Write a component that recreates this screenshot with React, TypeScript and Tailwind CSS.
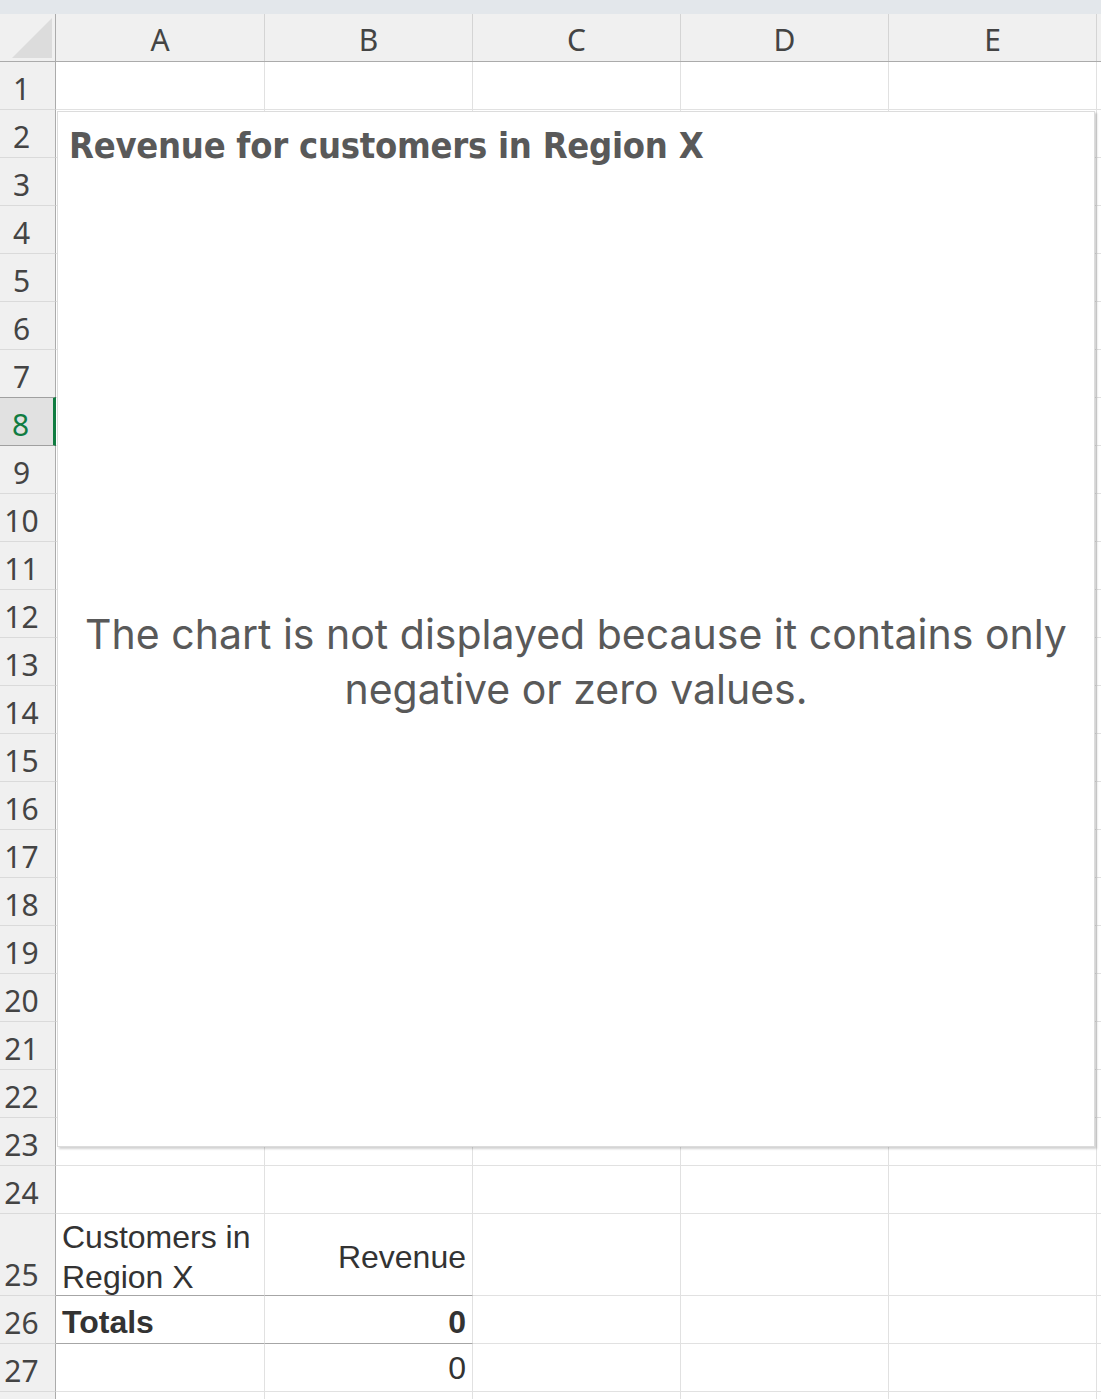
const COLS = ['A', 'B', 'C', 'D', 'E']
const ROWS = Array.from({ length: 28 }, (_, i) => i + 1)

const rowHeight = (n: number) => (n === 25 ? 'h-[82px]' : 'h-[48px]')

export default function App() {
  return (
    <div className="w-[1101px] h-[1399px] overflow-hidden bg-white relative" style={{ fontFamily: '"Noto Sans", sans-serif' }}>
      {/* top strip */}
      <div className="h-[14px] bg-[#e3e7eb]" />

      {/* column headers */}
      <div className="flex h-[48px] bg-[#f0f0f0] border-b border-[#ababab]">
        <div className="w-[56px] shrink-0 border-r border-[#ababab] flex items-end">
          <svg width="55" height="47" viewBox="0 0 55 47" className="block">
            <polygon points="12,44 52,4 52,44" fill="#dcdcdc" />
          </svg>
        </div>
        {COLS.map((c, i) => (
          <div
            key={c}
            className={`${i === 0 ? 'w-[209px]' : 'w-[208px]'} shrink-0 border-r border-[#d4d4d4] flex items-center justify-center text-[30px] text-[#444] leading-none pt-[4px]`}
          >
            {c}
          </div>
        ))}
        <div className="flex-1" />
      </div>

      {/* rows */}
      <div className="flex flex-col">
        {ROWS.map((n) => {
          const sel = n === 8
          return (
            <div key={n} className={`flex ${rowHeight(n)}`}>
              <div
                className={`w-[56px] shrink-0 flex items-end pb-[5px] pr-[12px] justify-center text-[30px] leading-none ${
                  sel
                    ? 'bg-[#e1e1e1] text-[#107c41] border-r-[3px] border-r-[#107c41] border-b border-b-[#a0a0a0] border-t border-t-[#a0a0a0] -mt-px'
                    : 'bg-[#f0f0f0] text-[#444] border-r border-r-[#ababab] border-b border-b-[#dadada]'
                }`}
              >
                {n < 28 && <span>{n}</span>}
              </div>
              <Cell w="w-[209px]" n={n} col="A" />
              <Cell w="w-[208px]" n={n} col="B" />
              <Cell w="w-[208px]" n={n} col="C" />
              <Cell w="w-[208px]" n={n} col="D" />
              <Cell w="w-[208px]" n={n} col="E" />
              <div className="flex-1 border-b border-[#e1e1e1]" />
            </div>
          )
        })}
      </div>

      {/* floating chart object */}
      <div className="absolute left-[57px] top-[111px] w-[1038px] h-[1036px] bg-white border border-[#dcdcdc] shadow-[2px_2px_2px_rgba(0,0,0,0.18)] flex flex-col">
        <div
          className="h-[68px] pl-[11px] pt-[7px] text-[36px] font-bold text-[#595959] tracking-[-0.25px]"
          style={{ fontFamily: '"DejaVu Sans Condensed", "Liberation Sans Narrow", "DejaVu Sans", sans-serif', fontStretch: 'condensed' }}
        >
          Revenue for customers in Region X
        </div>
        <div className="flex-1 flex items-center justify-center pb-[2px]">
          <p
            className="text-center text-[41px] leading-[55px] text-[#595959]"
            style={{ fontFamily: 'Inter, sans-serif' }}
          >
            The chart is not displayed because it contains only
            <br />
            negative or zero values.
          </p>
        </div>
      </div>
    </div>
  )
}

function Cell({ w, n, col }: { w: string; n: number; col: string }) {
  const arial = { fontFamily: '"Liberation Sans", Arial, sans-serif' }
  const dark = (n === 25 || n === 26) && (col === 'A' || col === 'B')
  const border = `border-r border-r-[#e1e1e1] border-b ${dark ? 'border-b-[#a6a6a6]' : 'border-b-[#e1e1e1]'}`
  let content: React.ReactNode = null
  let align = ''
  if (n === 25 && col === 'A') {
    content = (
      <span className="text-[32px] leading-[40px] text-[#333] pl-[6px] translate-y-[2px]">
        Customers in
        <br />
        Region X
      </span>
    )
    align = 'items-end'
  } else if (n === 25 && col === 'B') {
    content = <span className="text-[32px] text-[#333] leading-none pr-[6px]">Revenue</span>
    align = 'items-center justify-end pt-[4px]'
  } else if (n === 26 && col === 'A') {
    content = <span className="text-[32px] font-bold text-[#333] leading-none pl-[6px]">Totals</span>
    align = 'items-center pt-[4px]'
  } else if (n === 26 && col === 'B') {
    content = <span className="text-[32px] font-bold text-[#333] leading-none pr-[6px]">0</span>
    align = 'items-center justify-end pt-[4px]'
  } else if (n === 27 && col === 'B') {
    content = <span className="text-[32px] text-[#333] leading-none pr-[6px]">0</span>
    align = 'items-center justify-end'
  }
  return (
    <div className={`${w} shrink-0 flex ${align} ${border}`} style={arial}>
      {content}
    </div>
  )
}
